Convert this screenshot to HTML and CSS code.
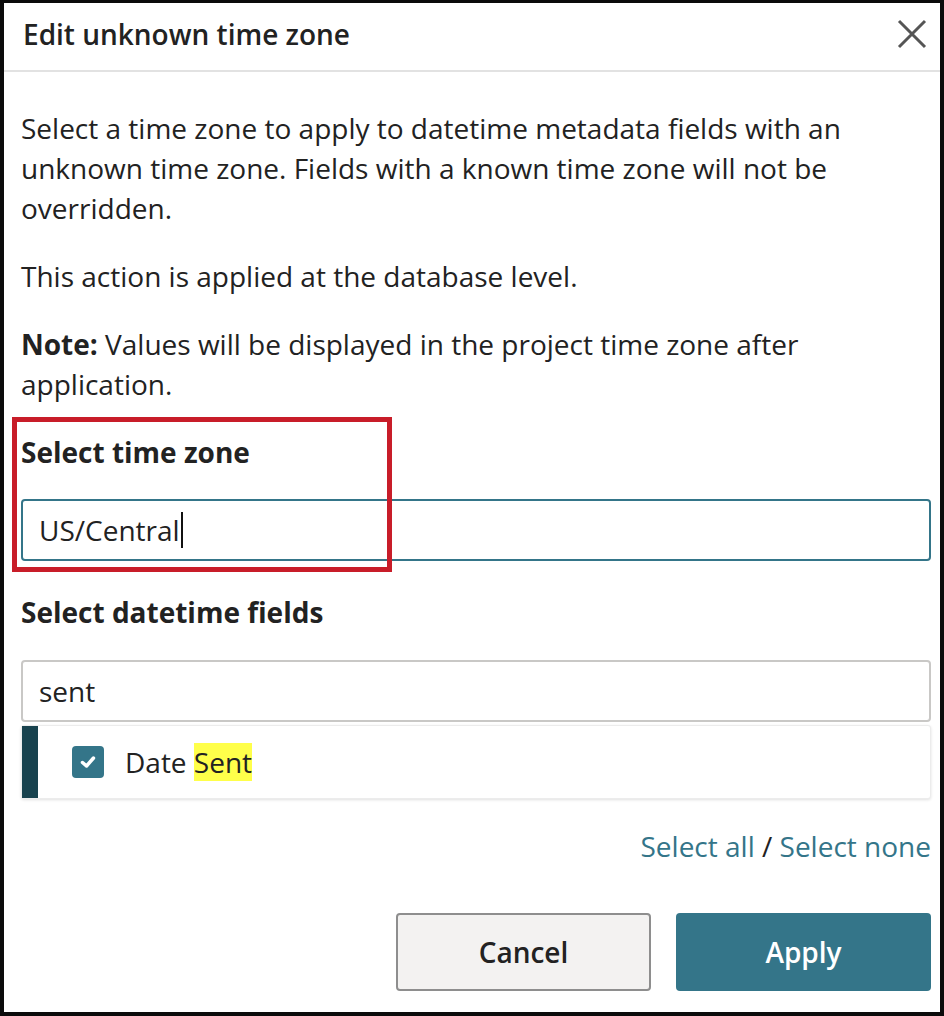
FILE: index.html
```html
<!DOCTYPE html>
<html lang="en">
<head>
    <meta charset="UTF-8">
    <meta name="viewport" content="width=device-width, initial-scale=1.0">
    <title>Edit unknown time zone</title>
    <link rel="stylesheet" href="styles.css">
</head>
<body>
    <div class="dialog">
        <div class="dialog-header">
            <h2>Edit unknown time zone</h2>
            <button class="close-btn" aria-label="Close">
                <svg width="30" height="30" viewBox="0 0 30 30">
                    <path d="M2 2 L28 28 M28 2 L2 28" stroke="#555" stroke-width="3" fill="none"/>
                </svg>
            </button>
        </div>

        <div class="dialog-body">
            <p>Select a time zone to apply to datetime metadata fields with an unknown time zone. Fields with a known time zone will not be overridden.</p>
            <p>This action is applied at the database level.</p>
            <p><strong>Note:</strong> Values will be displayed in the project time zone after application.</p>

            <div class="field">
                <div class="annotation"></div>
                <label class="field-label">Select time zone</label>
                <div class="text-input focused">US/Central<span class="caret"></span></div>
            </div>

            <div class="field fields-group">
                <label class="field-label">Select datetime fields</label>
                <div class="text-input">sent</div>
                <div class="option-list">
                    <div class="option selected">
                        <span class="checkbox">
                            <svg width="20" height="20" viewBox="0 0 20 20">
                                <path d="M4.5 10.5 L8.5 14 L15.5 6" stroke="#fff" stroke-width="3.5" fill="none" stroke-linecap="round" stroke-linejoin="round"/>
                            </svg>
                        </span>
                        <span class="option-text">Date <mark>Sent</mark></span>
                    </div>
                </div>
            </div>

            <div class="select-links">
                <a href="#">Select all</a> / <a href="#">Select none</a>
            </div>

            <div class="dialog-footer">
                <button class="btn btn-cancel">Cancel</button>
                <button class="btn btn-apply">Apply</button>
            </div>
        </div>
    </div>
</body>
</html>
```

FILE: styles.css
```css
* {
    box-sizing: border-box;
}

body {
    margin: 0;
    font-family: 'Open Sans', sans-serif;
    color: #222;
    background: #fff;
}

.dialog {
    width: 944px;
    height: 1016px;
    border: 4px solid #0b0b0b;
    border-top-width: 3px;
    display: flex;
    flex-direction: column;
    background: #fff;
}

.dialog-header {
    height: 69px;
    border-bottom: 2px solid #e2e2e2;
    display: flex;
    align-items: center;
    justify-content: space-between;
    padding: 0 13px 6px 19px;
}

.dialog-header h2 {
    margin: 0;
    font-size: 28px;
    font-weight: 600;
    line-height: 36px;
}

.close-btn {
    border: none;
    background: none;
    padding: 0;
    width: 30px;
    height: 30px;
    cursor: pointer;
}

.dialog-body {
    flex: 1;
    padding: 36px 9px 21px 17px;
    display: flex;
    flex-direction: column;
}

.dialog-body p {
    margin: 0 0 28px;
    font-size: 28px;
    line-height: 40px;
}

.field {
    position: relative;
}

.annotation {
    position: absolute;
    left: -9px;
    top: -15px;
    width: 380px;
    height: 155px;
    border: 5px solid #c81d29;
    pointer-events: none;
}

.field-label {
    display: block;
    font-size: 28px;
    font-weight: 700;
    line-height: 40px;
    margin-bottom: 27px;
}

.fields-group {
    margin-top: 31px;
}

.fields-group .field-label {
    margin-bottom: 28px;
}

.text-input {
    height: 62px;
    border: 2px solid #c9c8c6;
    border-radius: 4px;
    padding: 0 16px;
    display: flex;
    align-items: center;
    font-size: 28px;
    background: #fff;
}

.text-input.focused {
    border-color: #347589;
}

.caret {
    display: inline-block;
    width: 2px;
    height: 36px;
    background: #111;
    margin-left: 1px;
}

.option-list {
    margin-top: 3px;
    border: 1px solid #ececec;
    border-radius: 3px;
    box-shadow: 0 1px 3px rgba(0, 0, 0, 0.12);
    background: #fff;
}

.option {
    height: 72px;
    display: flex;
    align-items: center;
    padding-left: 50px;
    font-size: 28px;
}

.option.selected {
    border-left: 16px solid #18424e;
    padding-left: 34px;
}

.checkbox {
    width: 32px;
    height: 32px;
    border-radius: 4px;
    background: #347589;
    display: flex;
    align-items: center;
    justify-content: center;
    margin-right: 21px;
}

mark {
    background: #ffff4a;
    color: #222;
}

.select-links {
    margin-top: 27px;
    text-align: right;
    font-size: 28px;
    line-height: 40px;
}

.select-links a {
    color: #347589;
    text-decoration: none;
}

.dialog-footer {
    margin-top: auto;
    display: flex;
    justify-content: flex-end;
    gap: 25px;
}

.btn {
    width: 255px;
    height: 78px;
    border-radius: 4px;
    font-family: 'Open Sans', sans-serif;
    font-size: 28px;
    font-weight: 600;
    cursor: pointer;
}

.btn-cancel {
    background: #f3f2f1;
    border: 2px solid #8e8e8e;
    color: #222;
}

.btn-apply {
    background: #347589;
    border: none;
    color: #fff;
}
```
